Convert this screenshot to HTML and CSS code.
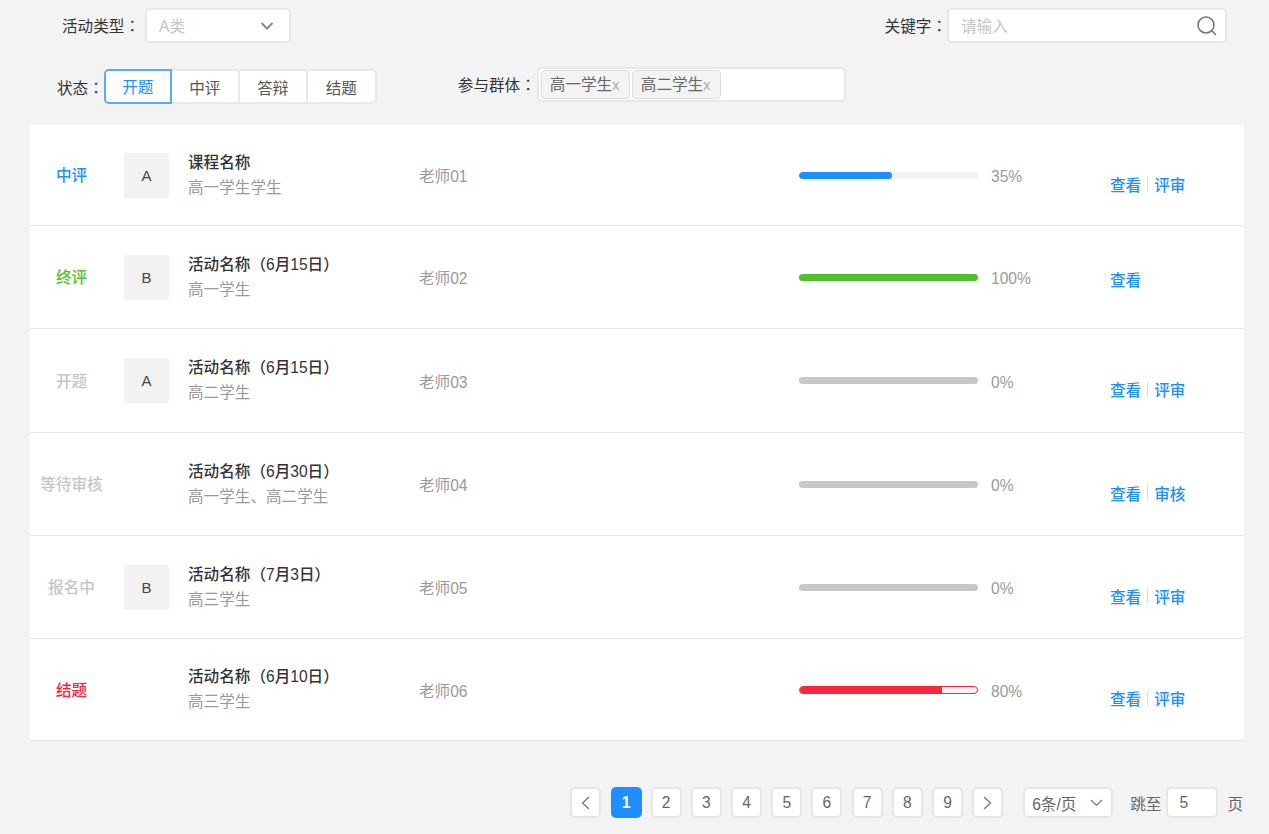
FILE: index.html
```html
<!DOCTYPE html>
<html lang="zh">
<head>
	<meta charset="utf-8">
	<title>活动列表</title>
	<link rel="stylesheet" href="styles.css">
</head>
<body>

<div class="filters">
	<div class="filter-row first">
		<div class="field">
			<span class="label">活动类型<span class="colon" lang="zh-Hant">：</span></span>
			<div class="select type-select">
				<span class="select-value">A类</span>
				<svg class="chevron" width="14" height="8" viewBox="0 0 14 8"><path d="M1.5 1 L7 6.5 L12.5 1"/></svg>
			</div>
		</div>
		<div class="field">
			<span class="label">关键字<span class="colon" lang="zh-Hant">：</span></span>
			<div class="search">
				<span class="placeholder">请输入</span>
				<svg class="search-icon" width="22" height="22" viewBox="0 0 22 22"><circle cx="10" cy="10" r="8"/><path d="M15.8 15.8 L20 20"/></svg>
			</div>
		</div>
	</div>
	<div class="filter-row second">
		<div class="field state-field">
			<span class="label">状态<span class="colon" lang="zh-Hant">：</span></span>
			<div class="tabs">
				<span class="tab active">开题</span>
				<span class="tab">中评</span>
				<span class="tab">答辩</span>
				<span class="tab">结题</span>
			</div>
		</div>
		<div class="field group-field">
			<span class="label">参与群体<span class="colon" lang="zh-Hant">：</span></span>
			<div class="tag-box">
				<span class="tag">高一学生<i>x</i></span>
				<span class="tag">高二学生<i>x</i></span>
			</div>
		</div>
	</div>
</div>

<div class="list">
	<div class="row">
		<div class="state blue">中评</div>
		<div class="badge-cell"><span class="badge">A</span></div>
		<div class="info"><div class="name">课程名称</div><div class="sub">高一学生学生</div></div>
		<div class="teacher">老师01</div>
		<div class="progress">
			<div class="bar"><div class="fill blue-fill" style="width: 52%"></div></div>
			<span class="percent">35%</span>
		</div>
		<div class="actions"><a>查看</a><b></b><a>评审</a></div>
	</div>
	<div class="row">
		<div class="state green">终评</div>
		<div class="badge-cell"><span class="badge">B</span></div>
		<div class="info"><div class="name">活动名称（6月15日）</div><div class="sub">高一学生</div></div>
		<div class="teacher">老师02</div>
		<div class="progress">
			<div class="bar"><div class="fill green-fill" style="width: 100%"></div></div>
			<span class="percent">100%</span>
		</div>
		<div class="actions single"><a>查看</a></div>
	</div>
	<div class="row">
		<div class="state grey">开题</div>
		<div class="badge-cell"><span class="badge">A</span></div>
		<div class="info"><div class="name">活动名称（6月15日）</div><div class="sub">高二学生</div></div>
		<div class="teacher">老师03</div>
		<div class="progress">
			<div class="bar idle"></div>
			<span class="percent">0%</span>
		</div>
		<div class="actions"><a>查看</a><b></b><a>评审</a></div>
	</div>
	<div class="row">
		<div class="state grey">等待审核</div>
		<div class="badge-cell"></div>
		<div class="info"><div class="name">活动名称（6月30日）</div><div class="sub">高一学生、高二学生</div></div>
		<div class="teacher">老师04</div>
		<div class="progress">
			<div class="bar idle"></div>
			<span class="percent">0%</span>
		</div>
		<div class="actions"><a>查看</a><b></b><a>审核</a></div>
	</div>
	<div class="row">
		<div class="state grey">报名中</div>
		<div class="badge-cell"><span class="badge">B</span></div>
		<div class="info"><div class="name">活动名称（7月3日）</div><div class="sub">高三学生</div></div>
		<div class="teacher">老师05</div>
		<div class="progress">
			<div class="bar idle"></div>
			<span class="percent">0%</span>
		</div>
		<div class="actions"><a>查看</a><b></b><a>评审</a></div>
	</div>
	<div class="row">
		<div class="state red">结题</div>
		<div class="badge-cell"></div>
		<div class="info"><div class="name">活动名称（6月10日）</div><div class="sub">高三学生</div></div>
		<div class="teacher">老师06</div>
		<div class="progress">
			<div class="bar outlined"><div class="fill red-fill" style="width: 80%"></div></div>
			<span class="percent">80%</span>
		</div>
		<div class="actions"><a>查看</a><b></b><a>评审</a></div>
	</div>
</div>

<div class="pager">
	<div class="pages">
		<span class="page"><svg class="arrow" width="9" height="14" viewBox="0 0 9 14"><path d="M8 1 L1.5 7 L8 13"/></svg></span>
		<span class="page current">1</span>
		<span class="page">2</span>
		<span class="page">3</span>
		<span class="page">4</span>
		<span class="page">5</span>
		<span class="page">6</span>
		<span class="page">7</span>
		<span class="page">8</span>
		<span class="page">9</span>
		<span class="page"><svg class="arrow" width="9" height="14" viewBox="0 0 9 14"><path d="M1 1 L7.5 7 L1 13"/></svg></span>
	</div>
	<div class="size-select">
		<span>6条/页</span>
		<svg class="chevron thin" width="13" height="8" viewBox="0 0 13 8"><path d="M1 1 L6.5 6.5 L12 1"/></svg>
	</div>
	<span class="jump-text">跳至</span>
	<span class="jump-input">5</span>
	<span class="page-text">页</span>
</div>

</body>
</html>
```

FILE: styles.css
```css
body {
	margin: 0;
	background: #f3f3f3;
	font-family: "Liberation Sans", "Noto Sans CJK SC", sans-serif;
	font-size: 15.6px;
	color: #333;
}

/* filters */
.filter-row {
	display: flex;
}
.filter-row.first {
	justify-content: space-between;
	padding: 8px 42px 0 62px;
	height: 35px;
}
.filter-row.second {
	align-items: flex-start;
	margin-top: 24px;
	padding-left: 57px;
	height: 58px;
}
.field {
	display: flex;
	align-items: center;
}
.label {
	white-space: nowrap;
	color: #333;
}
/* the TC face centres the full width colon */
.colon {
	font-family: "Noto Sans CJK TC", sans-serif;
}
.first .label,
.first .select-value,
.first .placeholder {
	padding-bottom: 2px;
}
.group-field .label {
	padding-bottom: 2px;
}
.select, .search, .tag-box {
	box-sizing: border-box;
	background: #fff;
	border: 2px solid #e8e8e8;
	border-radius: 5px;
}
.select {
	display: flex;
	align-items: center;
	justify-content: space-between;
	width: 146px;
	height: 35px;
	margin-left: 5px;
	padding: 0 15px 0 12px;
}
.select-value, .placeholder {
	color: #c4c4c4;
}
.chevron {
	fill: none;
	stroke: #888;
	stroke-width: 2;
}
.chevron.thin {
	stroke: #777;
	stroke-width: 1.2;
}
.search {
	display: flex;
	align-items: center;
	justify-content: space-between;
	width: 280px;
	height: 35px;
	padding: 0 7px 0 12px;
}
.search-icon {
	fill: none;
	stroke: #777;
	stroke-width: 1.6;
}

.state-field {
	margin-top: 2px;
}
.tabs {
	display: flex;
}
.tab {
	box-sizing: border-box;
	width: 68px;
	height: 35px;
	line-height: 35px;
	text-align: center;
	background: #fff;
	border: 2px solid #e8e8e8;
	border-left-width: 0;
	color: #555;
}
.tab:last-child {
	width: 69px;
	border-radius: 0 5px 5px 0;
}
.tab.active {
	line-height: 33px;
	color: #1f8fff;
	border: 2px solid #5aaaff;
	border-radius: 5px 0 0 5px;
}
.group-field {
	margin-left: 81px;
}
.tag-box {
	display: flex;
	align-items: center;
	gap: 2px;
	width: 309px;
	height: 35px;
	margin-left: 1px;
	padding-left: 2px;
}
.tag {
	box-sizing: border-box;
	width: 89px;
	height: 29px;
	line-height: 28px;
	padding-left: 8px;
	background: #f3f3f3;
	border: 1px solid #ddd;
	border-radius: 4px;
	color: #666;
}
.tag i {
	font-style: normal;
	font-size: 14px;
	color: #aaa;
}

/* list */
.list {
	margin: 0 25px 0 30px;
	background: #fff;
}
.row {
	box-sizing: border-box;
	display: flex;
	align-items: center;
	height: 103px;
	border-bottom: 1px solid #e6e6e6;
}
.row:nth-child(1) {
	height: 101px;
}
.row:nth-child(3) {
	height: 104px;
}
.row:nth-child(6) {
	height: 102px;
}
.state {
	width: 83px;
	flex-shrink: 0;
	padding-bottom: 2px;
	text-align: center;
	font-weight: 500;
}
.blue { color: #1f8fff; }
.green { color: #52c02a; }
.grey { color: #c6c6c6; }
.red { color: #f5293b; }
.badge-cell {
	width: 75px;
	flex-shrink: 0;
	padding-left: 11px;
	box-sizing: border-box;
}
.badge {
	display: block;
	width: 45px;
	height: 45px;
	line-height: 45px;
	text-align: center;
	background: #f2f2f2;
	border-radius: 2px;
	font-size: 15px;
	color: #444;
}
.info {
	width: 231px;
	flex-shrink: 0;
}
.name {
	font-weight: 500;
	color: #333;
	line-height: 22px;
}
.sub {
	margin-top: 3px;
	line-height: 22px;
	color: #999;
}
.teacher {
	width: 380px;
	flex-shrink: 0;
	color: #999;
}
.progress {
	display: flex;
	align-items: center;
	width: 311px;
	flex-shrink: 0;
}
.bar {
	box-sizing: border-box;
	width: 179px;
	height: 7px;
	background: #f3f3f3;
	border-radius: 4px;
	overflow: hidden;
}
.bar.idle {
	background: #c8c8c8;
}
.bar.outlined {
	height: 8px;
	background: #f3f3f3;
	border: 1px solid #f5293b;
}
.fill {
	height: 100%;
}
.blue-fill {
	background: #1f8fff;
	border-radius: 4px;
}
.green-fill { background: #52c02a; }
.red-fill { background: #f5293b; }
.percent {
	margin-left: 13px;
	padding-top: 4px;
	color: #999;
}
.actions {
	display: flex;
	align-items: center;
	margin-top: 17px;
}
.actions.single {
	margin-top: 4px;
}
.actions a {
	color: #1f8fff;
	font-weight: 500;
}
.actions b {
	width: 1px;
	height: 15px;
	margin: 0 6px;
	background: #ddd;
}

/* pager */
.pager {
	display: flex;
	align-items: center;
	justify-content: flex-end;
	height: 31px;
	margin-top: 46px;
	padding-right: 26px;
	color: #666;
}
.pages {
	display: flex;
	gap: 9.2px;
}
.page {
	box-sizing: border-box;
	display: flex;
	align-items: center;
	justify-content: center;
	width: 31px;
	height: 31px;
	background: #fff;
	border: 2px solid #e6e6e6;
	border-radius: 5px;
}
.page.current {
	background: #1f8fff;
	border-color: #1f8fff;
	color: #fff;
	font-weight: 700;
}
.arrow {
	fill: none;
	stroke: #777;
	stroke-width: 1.3;
}
.size-select {
	box-sizing: border-box;
	display: flex;
	align-items: center;
	justify-content: space-between;
	width: 90px;
	height: 31px;
	margin-left: 20px;
	padding: 0 8px 0 7px;
	background: #fff;
	border: 2px solid #e6e6e6;
	border-radius: 5px;
}
.jump-text {
	margin-left: 17px;
}
.jump-input {
	box-sizing: border-box;
	width: 52px;
	height: 31px;
	line-height: 27px;
	margin-left: 5px;
	padding-left: 11px;
	background: #fff;
	border: 2px solid #e6e6e6;
	border-radius: 5px;
}
.page-text {
	margin-left: 9px;
}
```
